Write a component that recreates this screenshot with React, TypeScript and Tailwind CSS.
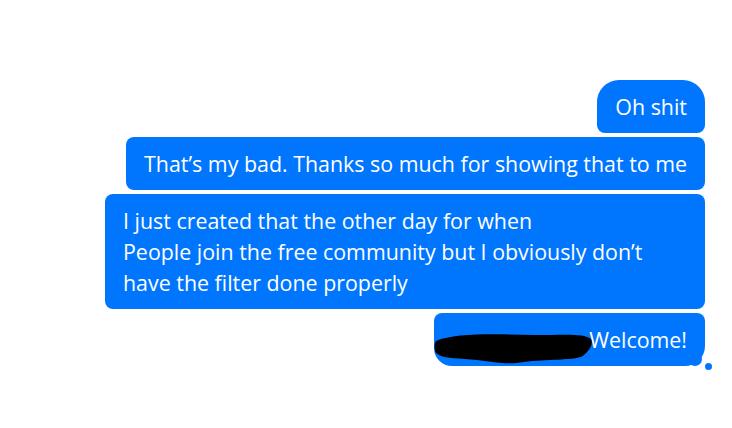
import React from "react";

const bubble =
  "bg-[#0076ff] text-white text-[21.4px] leading-[31px] px-[18px] py-[11px]";

export default function App() {
  return (
    <div
      className="w-[732px] h-[428px] bg-white flex flex-col items-end pt-[80px] pr-[27px] gap-[4px]"
      style={{ fontFamily: '"Open Sans", "Noto Sans", sans-serif' }}
    >
      <div className={`${bubble} rounded-tl-[22px] rounded-tr-[22px] rounded-bl-[8px] rounded-br-[8px]`}>
        Oh shit
      </div>
      <div className={`${bubble} rounded-[8px]`}>
        That’s my bad. Thanks so much for showing that to me
      </div>
      <div className={`${bubble} rounded-[8px] w-[600px] py-[10px]`}>
        I just created that the other day for when
        <br />
        People join the free community but I obviously don’t
        <br />
        have the filter done properly
      </div>
      <div className="relative">
        <div
          className={`${bubble} w-[271px] text-right rounded-tl-[8px] rounded-tr-[8px] rounded-bl-[18px] rounded-br-[20px] relative`}
        >
          Welcome!
          <svg
            className="absolute left-0 top-[16px]"
            width="160"
            height="40"
            viewBox="0 0 160 40"
          >
            <path
              d="M2 12 C 20 4, 60 5, 100 6 C 130 6, 150 4, 157 10 C 160 16, 154 22, 150 26 C 145 32, 110 30, 90 33 C 70 37, 55 31, 30 30 C 15 29, 6 28, 2 24 C 0 20, 0 15, 2 12 Z"
              fill="#000"
            />
          </svg>
        </div>
        <div className="absolute right-[3px] bottom-[0px] w-[14px] h-[14px] rounded-full bg-[#0076ff]" />
        <div className="absolute right-[-7px] bottom-[-4px] w-[7px] h-[7px] rounded-full bg-[#0076ff]" />
      </div>
    </div>
  );
}
